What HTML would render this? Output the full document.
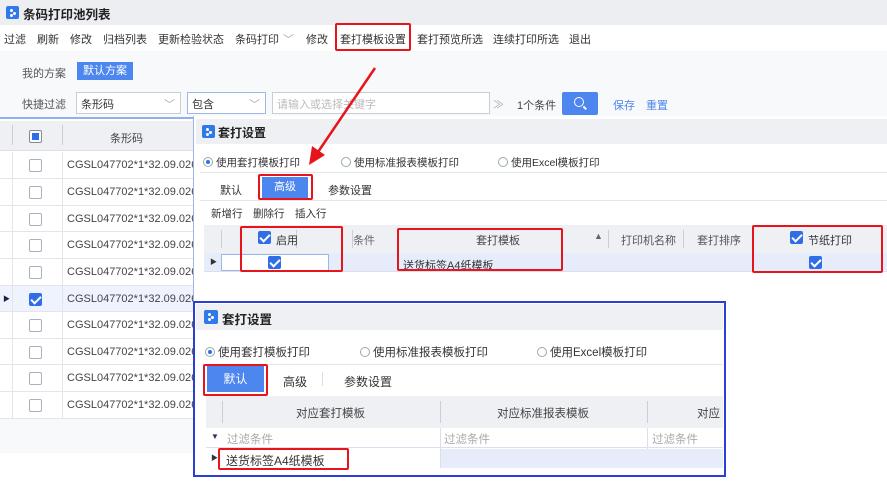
<!DOCTYPE html>
<html><head><meta charset="utf-8"><style>
*{margin:0;padding:0;box-sizing:border-box}
body{width:887px;height:489px;overflow:hidden;background:#fff;font-family:"Liberation Sans","Noto Sans CJK SC",sans-serif;font-size:11px;color:#333;position:relative}
.a{position:absolute;white-space:nowrap}
.red{position:absolute;border:2px solid #e8141b;border-radius:2px}
.cb{position:absolute;width:13px;height:13px;border:1px solid #aab0bf;border-radius:2px;background:#fff}
.cbc{position:absolute;width:13px;height:13px;background:#2f6ee6;border-radius:2px}
.cbc:after{content:"";position:absolute;left:4px;top:1px;width:4px;height:8px;border:solid #fff;border-width:0 2px 2px 0;transform:rotate(45deg)}
.icon{position:absolute;width:13px;height:13px;background:#2f7ae8;border-radius:2px}
.icon:after{content:"";position:absolute;left:4px;top:3px;width:3px;height:3px;background:#fff;border-radius:50%;box-shadow:3px 3px 0 #fff,0 5px 0 #fff}
.sel{position:absolute;border:1px solid #c9cdd6;background:#fff;height:22px;padding:3px 4px;font-size:11px}
.radio{display:inline-block;width:10px;height:10px;border:1px solid #9aa;border-radius:50%;vertical-align:-1px;margin-right:3px;background:#fff;position:relative}
.radio.on:after{content:"";position:absolute;left:2px;top:2px;width:4px;height:4px;border-radius:50%;background:#2f6ee6}
.vs{position:absolute;width:1px;background:#ccd}
</style></head><body>
<div class="a" style="left:0;top:0;width:887px;height:25px;background:#eceef2"></div>
<div class="icon" style="left:6px;top:6px"></div>
<div class="a" style="left:23px;top:4px;font-weight:bold;font-size:12.5px;color:#222">条码打印池列表</div>
<div class="a" style="left:0;top:25px;width:887px;height:26px;background:#fff"></div>
<div class="a" style="left:4px;top:31px;font-size:11px;color:#333">
<span style="margin-right:11px">过滤</span><span style="margin-right:11px">刷新</span><span style="margin-right:11px">修改</span><span style="margin-right:11px">归档列表</span><span style="margin-right:11px">更新检验状态</span><span style="margin-right:4px">条码打印</span><span style="color:#aaa;margin-right:12px">﹀</span><span style="margin-right:12px">修改</span><span style="margin-right:11px">套打模板设置</span><span style="margin-right:10px">套打预览所选</span><span style="margin-right:10px">连续打印所选</span><span>退出</span></div>
<div class="red" style="left:335px;top:23px;width:76px;height:28px"></div>
<div class="a" style="left:0;top:51px;width:887px;height:66px;background:#f8f9fb"></div>
<div class="a" style="left:22px;top:65px;color:#555">我的方案</div>
<div class="a" style="left:77px;top:62px;width:56px;height:18px;background:#4d86ee;color:#fff;text-align:center;line-height:18px">默认方案</div>
<div class="a" style="left:22px;top:96px;color:#555">快捷过滤</div>
<div class="sel" style="left:76px;top:92px;width:105px">条形码<span style="position:absolute;right:5px;color:#aaa">﹀</span></div>
<div class="sel" style="left:187px;top:92px;width:79px;border-color:#9cb6e8">包含<span style="position:absolute;right:5px;color:#aaa">﹀</span></div>
<div class="sel" style="left:272px;top:92px;width:218px;color:#bbb">请输入或选择关键字</div>
<div class="a" style="left:493px;top:96px;color:#aaa">≫</div>
<div class="a" style="left:517px;top:97px;color:#444">1个条件</div>
<div class="a" style="left:562px;top:92px;width:36px;height:23px;background:#4d86ee;border-radius:2px"></div>
<div class="a" style="left:574px;top:97px;width:10px;height:10px;border:1.5px solid #fff;border-radius:50%"></div>
<div class="a" style="left:583px;top:107px;width:4px;height:1.5px;background:#fff;transform:rotate(45deg)"></div>
<div class="a" style="left:613px;top:97px;color:#4d86ee">保存</div>
<div class="a" style="left:646px;top:97px;color:#4d86ee">重置</div>
<div class="a" style="left:0;top:117px;width:887px;height:2px;background:#8fb1ee"></div>
<div class="a" style="left:0;top:121px;width:193px;height:30px;background:#eef0f4;border-bottom:1px solid #dde"></div>
<div class="a" style="left:12px;top:125px;width:1px;height:20px;background:#ccd"></div>
<div class="a" style="left:62px;top:125px;width:1px;height:20px;background:#ccd"></div>
<div class="cb" style="left:29px;top:130px;border-color:#889"><div style="position:absolute;left:2px;top:2px;width:7px;height:7px;background:#2f6ee6"></div></div>
<div class="a" style="left:110px;top:130px;color:#444">条形码</div>
<div id="rows"></div>
<div class="a" style="left:0;top:419px;width:193px;height:34px;background:#f8f9fb"></div>
<!-- dialog 1 -->
<div class="a" style="left:193px;top:116px;width:694px;height:186px;background:#fff;border-left:1px solid #9cb6e8"></div>
<div class="a" style="left:196px;top:119px;width:691px;height:25px;background:#eef0f3"></div>
<div class="icon" style="left:202px;top:125px"></div>
<div class="a" style="left:218px;top:124px;font-weight:bold;font-size:12px;color:#222">套打设置</div>
<div class="a" style="left:203px;top:155px;font-size:10.5px"><span class="radio on"></span>使用套打模板打印</div>
<div class="a" style="left:341px;top:155px;font-size:10.5px"><span class="radio"></span>使用标准报表模板打印</div>
<div class="a" style="left:498px;top:155px;font-size:10.5px"><span class="radio"></span>使用Excel模板打印</div>
<div class="a" style="left:200px;top:172px;width:687px;height:1px;background:#e4e6ea"></div>
<div class="a" style="left:220px;top:182px">默认</div>
<div class="a" style="left:262px;top:177px;width:46px;height:21px;background:#4d86ee;color:#fff;text-align:center;line-height:21px">高级</div>
<div class="red" style="left:258px;top:174px;width:55px;height:26px"></div>
<div class="a" style="left:328px;top:182px">参数设置</div>
<div class="a" style="left:200px;top:200px;width:687px;height:1px;background:#e4e6ea"></div>
<div class="a" style="left:211px;top:206px;font-size:10.5px">新增行　删除行　插入行</div>
<div class="a" style="left:204px;top:225px;width:683px;height:28px;background:#eef0f4"></div>
<div class="vs" style="left:221px;top:230px;height:18px"></div>
<div class="vs" style="left:296px;top:230px;height:18px"></div>
<div class="vs" style="left:352px;top:230px;height:18px"></div>
<div class="vs" style="left:608px;top:230px;height:18px"></div>
<div class="vs" style="left:683px;top:230px;height:18px"></div>
<div class="a" style="left:204px;top:253px;width:683px;height:19px;background:#e6ecfa;border-bottom:1px solid #dde"></div>
<div class="a" style="left:221px;top:254px;width:108px;height:17px;background:#fff;border:1px solid #9cb6e8"></div>
<div class="a" style="left:210px;top:257px;font-size:7px">▶</div>
<div class="cbc" style="left:258px;top:231px"></div>
<div class="a" style="left:276px;top:232px">启用</div>
<div class="a" style="left:353px;top:232px;color:#666">条件</div>
<div class="a" style="left:476px;top:232px;color:#444">套打模板</div>
<div class="a" style="left:594px;top:231px;color:#666;font-size:9px">▲</div>
<div class="a" style="left:621px;top:232px;color:#555">打印机名称</div>
<div class="a" style="left:697px;top:232px;color:#555">套打排序</div>
<div class="cbc" style="left:790px;top:231px"></div>
<div class="a" style="left:808px;top:232px">节纸打印</div>
<div class="cbc" style="left:268px;top:256px"></div>
<div class="cbc" style="left:809px;top:256px"></div>
<div class="a" style="left:403px;top:257px">送货标签A4纸模板</div>
<div class="red" style="left:240px;top:226px;width:103px;height:46px"></div>
<div class="red" style="left:397px;top:228px;width:166px;height:43px"></div>
<div class="red" style="left:752px;top:225px;width:131px;height:48px"></div>
<!-- dialog 2 -->
<div class="a" style="left:193px;top:301px;width:533px;height:176px;background:#fff;border:2px solid #2b3fd6"></div>
<div class="a" style="left:196px;top:304px;width:527px;height:26px;background:#eef0f3"></div>
<div class="icon" style="left:204px;top:310px;width:14px;height:14px"></div>
<div class="a" style="left:222px;top:309px;font-weight:bold;font-size:12.5px;color:#222">套打设置</div>
<div class="a" style="left:205px;top:344px;font-size:11.5px"><span class="radio on"></span>使用套打模板打印</div>
<div class="a" style="left:360px;top:344px;font-size:11.5px"><span class="radio"></span>使用标准报表模板打印</div>
<div class="a" style="left:537px;top:344px;font-size:11.5px"><span class="radio"></span>使用Excel模板打印</div>
<div class="a" style="left:206px;top:364px;width:517px;height:1px;background:#e4e6ea"></div>
<div class="a" style="left:207px;top:366px;width:57px;height:26px;background:#4d86ee;color:#fff;text-align:center;line-height:27px;font-size:12px">默认</div>
<div class="red" style="left:203px;top:364px;width:65px;height:32px"></div>
<div class="a" style="left:283px;top:373px;font-size:12px">高级</div>
<div class="a" style="left:322px;top:372px;width:1px;height:14px;background:#ddd"></div>
<div class="a" style="left:344px;top:373px;font-size:12px">参数设置</div>
<div class="a" style="left:206px;top:396px;width:517px;height:32px;background:#eef0f4"></div>
<div class="vs" style="left:222px;top:401px;height:22px"></div>
<div class="vs" style="left:440px;top:401px;height:22px"></div>
<div class="vs" style="left:647px;top:401px;height:22px"></div>
<div class="a" style="left:296px;top:405px;font-size:11.5px;color:#444">对应套打模板</div>
<div class="a" style="left:497px;top:405px;font-size:11.5px;color:#444">对应标准报表模板</div>
<div class="a" style="left:697px;top:405px;font-size:11.5px;color:#444">对应</div>
<div class="a" style="left:206px;top:428px;width:517px;height:20px;border-bottom:1px solid #dde"></div>
<div class="a" style="left:440px;top:428px;width:1px;height:40px;background:#dde"></div>
<div class="a" style="left:647px;top:428px;width:1px;height:40px;background:#dde"></div>
<div class="a" style="left:211px;top:432px;font-size:8px;color:#335">▼</div>
<div class="a" style="left:227px;top:431px;font-size:11.5px;color:#aaa">过滤条件</div>
<div class="a" style="left:444px;top:431px;font-size:11.5px;color:#aaa">过滤条件</div>
<div class="a" style="left:652px;top:431px;font-size:11.5px;color:#aaa">过滤条件</div>
<div class="a" style="left:441px;top:449px;width:282px;height:19px;background:#e6ecfa"></div>
<div class="a" style="left:211px;top:453px;font-size:7px">▶</div>
<div class="a" style="left:226px;top:452px;font-size:12px">送货标签A4纸模板</div>
<div class="red" style="left:218px;top:448px;width:131px;height:22px"></div>
<svg class="a" style="left:0;top:0" width="887" height="489"><line x1="375" y1="68" x2="318" y2="152" stroke="#e8141b" stroke-width="2.5"/><polygon points="309,165 312,146 325,155" fill="#e8141b"/></svg>
<script>
var r=document.getElementById('rows'),h='',ys=[152,179,206,232,259,286,312,339,365,392,419];
for(var i=0;i<10;i++){var y=ys[i],hh=ys[i+1]-y,s=i==5;
h+='<div class="a" style="left:0;top:'+y+'px;width:193px;height:'+hh+'px;border-bottom:1px solid #e3e5ea;background:'+(s?'#eef3fd':'#fff')+'"></div>';
h+='<div class="a" style="left:12px;top:'+y+'px;width:1px;height:'+hh+'px;background:#e3e5ea"></div><div class="a" style="left:62px;top:'+y+'px;width:1px;height:'+hh+'px;background:#e3e5ea"></div>';
h+=s?'<div class="cbc" style="left:29px;top:'+(y+7)+'px"></div><div class="a" style="left:3px;top:'+(y+8)+'px;font-size:7px;color:#224">▶</div>':'<div class="cb" style="left:29px;top:'+(y+7)+'px"></div>';
h+='<div class="a" style="left:67px;top:'+(y+7)+'px;color:#444;font-size:11px">CGSL047702*1*32.09.026</div>';}
r.innerHTML=h;
</script>
</body></html>
